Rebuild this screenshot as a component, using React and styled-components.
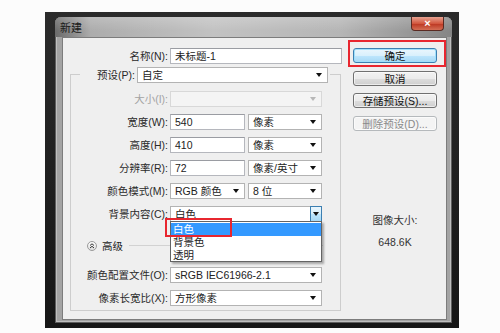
import React from 'react';
import styled, { createGlobalStyle } from 'styled-components';

const GlobalStyle = createGlobalStyle`
  html, body {
    margin: 0;
    padding: 0;
    background: #fcfcfc;
  }
  body {
    font-family: "Liberation Sans", "Noto Sans CJK SC", sans-serif;
    font-size: 10.5px;
    color: #222;
  }
`;

const Page = styled.div`
  width: 500px;
  height: 333px;
  box-sizing: border-box;
  padding: 12px 0 0 45px;
  overflow: hidden;
`;

const Frame = styled.div`
  width: 414px;
  height: 316px;
  box-sizing: border-box;
  padding: 5px 7px 5px 10px;
  background: linear-gradient(180deg, #2b2b2b 0%, #161616 100%);
`;

const Window = styled.div`
  height: 100%;
  display: flex;
  flex-direction: column;
  border-radius: 6px 6px 0 0;
  background: #a3a3a3;
  box-shadow: inset 0 0 0 1px #5e5e5e, inset 0 0 0 2px rgba(255, 255, 255, 0.3);
`;

const TitleBar = styled.div`
  height: 20px;
  flex: none;
  display: flex;
  align-items: center;
  justify-content: space-between;
  padding: 0 8px 0 5px;
  border-radius: 6px 6px 0 0;
  background:
    linear-gradient(180deg, rgba(255, 255, 255, 0.2) 0%, rgba(255, 255, 255, 0) 70%),
    linear-gradient(90deg, #6a6a6a 0%, #acacac 9%, #c2c2c2 40%, #b5b5b5 72%, #858585 100%);
`;

const Title = styled.span`
  color: #1a1a1a;
  font-size: 11px;
`;

const CloseButton = styled.div`
  align-self: flex-start;
  width: 33px;
  height: 14px;
  box-sizing: border-box;
  border: 1px solid #5a2a22;
  border-top: none;
  border-radius: 0 0 4px 4px;
  background: linear-gradient(180deg, #e8a392 0%, #d2573f 50%, #bb3520 51%, #d46e55 100%);
  color: #fff;
  font-size: 11px;
  font-weight: bold;
  display: flex;
  align-items: center;
  justify-content: center;
  line-height: 1;
`;

const Client = styled.div`
  flex: 1;
  margin: 0 5px 3px 7px;
  box-sizing: border-box;
  border: 1px solid #7c7c7c;
  background: #efefef;
  display: flex;
  padding: 9px 0 0 7px;
`;

const FormColumn = styled.div`
  width: 272px;
  display: flex;
  flex-direction: column;
`;

const Row = styled.div`
  display: flex;
  align-items: center;
  height: 17px;
  margin-top: ${p => p.$mt || 0}px;
`;

const Label = styled.span`
  flex: none;
  width: ${p => (p.$w ? `${p.$w}px` : 'auto')};
  margin-right: 2px;
  text-align: right;
  white-space: nowrap;
  color: ${p => (p.$disabled ? '#a3a3a3' : '#2a2a2a')};
`;

const TextBox = styled.div`
  flex: none;
  width: ${p => p.$w}px;
  height: 16px;
  box-sizing: border-box;
  border: 1px solid #b5b7bd;
  border-top-color: #9a9ca2;
  background: #fff;
  padding-left: 4px;
  display: flex;
  align-items: center;
`;

const Combo = styled.div`
  position: relative;
  flex: none;
  width: ${p => p.$w}px;
  height: 16px;
  box-sizing: border-box;
  margin-left: ${p => p.$ml || 0}px;
  border: 1px solid ${p => (p.$disabled ? '#d8d8d8' : '#b3b3b3')};
  background: ${p => (p.$disabled ? '#f4f4f4' : '#fff')};
  padding-left: 4px;
  display: flex;
  align-items: center;
  justify-content: space-between;
  white-space: nowrap;
`;

const Arrow = styled.span`
  width: 0;
  height: 0;
  margin-right: 5px;
  border-left: 3px solid transparent;
  border-right: 3px solid transparent;
  border-top: 4px solid ${p => (p.$disabled ? '#b8b8b8' : '#111')};
`;

const ArrowButton = styled.span`
  width: 12px;
  align-self: stretch;
  box-sizing: border-box;
  border: 1px solid #3c7fb1;
  margin: -1px -1px -1px 0;
  background: linear-gradient(180deg, #eaf6fd 0%, #d9f0fc 50%, #bee6fd 51%, #a7d9f5 100%);
  display: flex;
  align-items: center;
  justify-content: center;

  &::after {
    content: '';
    border-left: 3px solid transparent;
    border-right: 3px solid transparent;
    border-top: 4px solid #111;
  }
`;

const DropList = styled.div`
  position: absolute;
  top: 100%;
  left: -1px;
  right: -1px;
  height: 41px;
  box-sizing: border-box;
  padding: 1px 0;
  background: #fff;
  border: 1px solid #646464;
  box-shadow: 2px 2px 2px rgba(0, 0, 0, 0.3);
  z-index: 2;
`;

const DropItem = styled.div`
  height: 13px;
  line-height: 13px;
  padding-left: 2px;
  background: ${p => (p.$selected ? '#3399ff' : 'transparent')};
  color: ${p => (p.$selected ? '#fff' : '#222')};
`;

const Highlight = styled.div`
  position: absolute;
  top: ${p => p.$top}px;
  left: ${p => p.$left}px;
  width: ${p => p.$w}px;
  height: ${p => p.$h}px;
  box-sizing: border-box;
  border: 2px solid #e8262f;
  pointer-events: none;
  z-index: 3;
`;

const Group = styled.fieldset`
  margin: 2px 0 0 0;
  width: 271px;
  box-sizing: border-box;
  padding: 7px 0 4px 0;
  border: 1px solid #cdcdcd;
  min-width: 0;
`;

const Legend = styled.legend`
  margin-left: 9px;
  padding: 0 3px 0 17px;
  width: 250px;
  box-sizing: border-box;
  height: 17px;
  display: flex;
  align-items: center;
  background: #efefef;
`;

const Rows = styled.div`
  display: flex;
  flex-direction: column;
  gap: 6px;
`;

const Advanced = styled.div`
  display: flex;
  align-items: center;
  height: 17px;
  margin-top: 15px;
  padding-left: 16px;
  padding-right: 17px;
  gap: 5px;
`;

const AdvancedLine = styled.div`
  flex: 1;
  height: 1px;
  margin-left: 1px;
  background: #d2d2d2;
`;

const RightColumn = styled.div`
  margin-left: 11px;
  width: 84px;
  padding-top: 1px;
  display: flex;
  flex-direction: column;
  gap: 7.5px;
`;

const ButtonWrap = styled.div`
  position: relative;
`;

const Button = styled.div`
  height: 15px;
  box-sizing: border-box;
  border: 1px solid ${p => (p.$default ? '#3c7fb1' : p.$disabled ? '#b5b9bc' : '#707070')};
  border-radius: 3px;
  background: ${p =>
    p.$default
      ? 'linear-gradient(180deg, #eaf6fd 0%, #d9f0fc 50%, #bee6fd 51%, #a7d9f5 100%)'
      : p.$disabled
      ? '#f4f4f4'
      : 'linear-gradient(180deg, #f2f2f2 0%, #ebebeb 50%, #dddddd 51%, #cfcfcf 100%)'};
  box-shadow: ${p => (p.$default ? 'inset 0 0 0 1px #9fe0fb' : 'inset 0 0 0 1px rgba(255,255,255,0.6)')};
  color: ${p => (p.$disabled ? '#8a8a8a' : '#111')};
  display: flex;
  align-items: center;
  justify-content: center;
  white-space: nowrap;
`;

const Info = styled.div`
  margin-top: 71px;
  text-align: center;
  line-height: 22px;
  color: #333;
`;

const AdvancedIcon = () => (
  <svg width="10" height="10" viewBox="0 0 10 10">
    <defs>
      <linearGradient id="adv" x1="0" y1="0" x2="0" y2="1">
        <stop offset="0" stopColor="#ffffff" />
        <stop offset="1" stopColor="#dcdcdc" />
      </linearGradient>
    </defs>
    <circle cx="5" cy="5" r="4.5" fill="url(#adv)" stroke="#9a9a9a" />
    <polyline points="3,4.5 5,2.8 7,4.5" fill="none" stroke="#333" strokeWidth="1" />
    <polyline points="3,7 5,5.3 7,7" fill="none" stroke="#333" strokeWidth="1" />
  </svg>
);

export default function App() {
  return (
    <>
      <GlobalStyle />
      <Page>
        <Frame>
          <Window>
            <TitleBar>
              <Title>新建</Title>
              <CloseButton>×</CloseButton>
            </TitleBar>
            <Client>
              <FormColumn>
                <Row>
                  <Label $w={98}>名称(N):</Label>
                  <TextBox $w={172}>未标题-1</TextBox>
                </Row>
                <Group>
                  <Legend>
                    <Label>预设(P):</Label>
                    <Combo $w={191}>
                      自定
                      <Arrow />
                    </Combo>
                  </Legend>
                  <Rows>
                    <Row>
                      <Label $w={97} $disabled>大小(I):</Label>
                      <Combo $w={152} $disabled>
                        <span />
                        <Arrow $disabled />
                      </Combo>
                    </Row>
                    <Row>
                      <Label $w={97}>宽度(W):</Label>
                      <TextBox $w={75}>540</TextBox>
                      <Combo $w={74} $ml={3}>
                        像素
                        <Arrow />
                      </Combo>
                    </Row>
                    <Row>
                      <Label $w={97}>高度(H):</Label>
                      <TextBox $w={75}>410</TextBox>
                      <Combo $w={74} $ml={3}>
                        像素
                        <Arrow />
                      </Combo>
                    </Row>
                    <Row>
                      <Label $w={97}>分辨率(R):</Label>
                      <TextBox $w={75}>72</TextBox>
                      <Combo $w={74} $ml={3}>
                        像素/英寸
                        <Arrow />
                      </Combo>
                    </Row>
                    <Row>
                      <Label $w={97}>颜色模式(M):</Label>
                      <Combo $w={75}>
                        RGB 颜色
                        <Arrow />
                      </Combo>
                      <Combo $w={74} $ml={3}>
                        8 位
                        <Arrow />
                      </Combo>
                    </Row>
                    <Row>
                      <Label $w={97}>背景内容(C):</Label>
                      <Combo $w={152}>
                        白色
                        <ArrowButton />
                        <DropList>
                          <DropItem $selected>白色</DropItem>
                          <DropItem>背景色</DropItem>
                          <DropItem>透明</DropItem>
                          <Highlight $top={-4} $left={-6} $w={67} $h={19} />
                        </DropList>
                      </Combo>
                    </Row>
                  </Rows>
                  <Advanced>
                    <AdvancedIcon />
                    <span>高级</span>
                    <AdvancedLine />
                  </Advanced>
                  <Row $mt={12}>
                    <Label $w={97}>颜色配置文件(O):</Label>
                    <Combo $w={152}>
                      sRGB IEC61966-2.1
                      <Arrow />
                    </Combo>
                  </Row>
                  <Row $mt={6}>
                    <Label $w={97}>像素长宽比(X):</Label>
                    <Combo $w={152}>
                      方形像素
                      <Arrow />
                    </Combo>
                  </Row>
                </Group>
              </FormColumn>
              <RightColumn>
                <ButtonWrap>
                  <Button $default>确定</Button>
                  <Highlight $top={-8} $left={-5} $w={98} $h={27} />
                </ButtonWrap>
                <Button>取消</Button>
                <Button>存储预设(S)...</Button>
                <Button $disabled>删除预设(D)...</Button>
                <Info>
                  <div>图像大小:</div>
                  <div>648.6K</div>
                </Info>
              </RightColumn>
            </Client>
          </Window>
        </Frame>
      </Page>
    </>
  );
}
